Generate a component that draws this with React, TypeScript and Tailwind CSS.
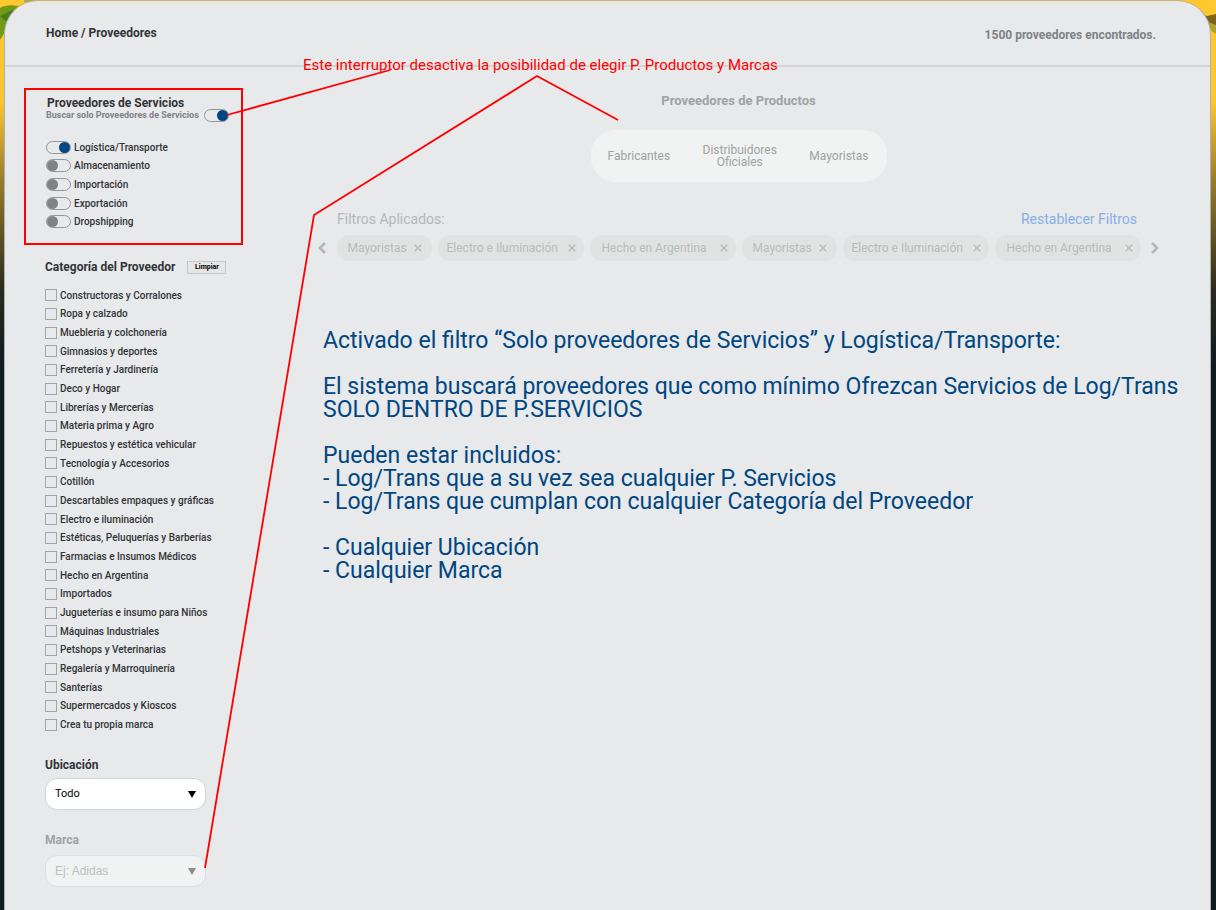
import React from "react";

const services = [
  { name: "Logística/Transporte", on: true },
  { name: "Almacenamiento", on: false },
  { name: "Importación", on: false },
  { name: "Exportación", on: false },
  { name: "Dropshipping", on: false },
];

const categories = [
  "Constructoras y Corralones",
  "Ropa y calzado",
  "Mueblería y colchonería",
  "Gimnasios y deportes",
  "Ferretería y Jardinería",
  "Deco y Hogar",
  "Librerías y Mercerías",
  "Materia prima y Agro",
  "Repuestos y estética vehicular",
  "Tecnología y Accesorios",
  "Cotillón",
  "Descartables empaques y gráficas",
  "Electro e iluminación",
  "Estéticas, Peluquerías y Barberías",
  "Farmacias e Insumos Médicos",
  "Hecho en Argentina",
  "Importados",
  "Jugueterías e insumo para Niños",
  "Máquinas Industriales",
  "Petshops y Veterinarias",
  "Regalería y Marroquinería",
  "Santerías",
  "Supermercados y Kioscos",
  "Crea tu propia marca",
];

const chips = [
  { label: "Mayoristas", size: "w-[95px] pl-[11px] pr-[10px]" },
  { label: "Electro e Iluminación", size: "w-[146px] pl-[9px] pr-[8px]" },
  { label: "Hecho en Argentina", size: "w-[146px] pl-[12px] pr-[8px]" },
  { label: "Mayoristas", size: "w-[95px] pl-[11px] pr-[10px]" },
  { label: "Electro e Iluminación", size: "w-[146px] pl-[9px] pr-[8px]" },
  { label: "Hecho en Argentina", size: "w-[146px] pl-[12px] pr-[8px]" },
];

function Toggle({ on, id }: { on: boolean; id: string }) {
  return (
    <input
      id={id}
      type="checkbox"
      role="switch"
      defaultChecked={on}
      className="flex h-[13px] w-[25px] shrink-0 appearance-none items-center rounded-full border border-[#939598] before:block before:size-[11px] before:rounded-full before:bg-[#808285] before:content-[''] checked:justify-end checked:before:bg-[#004680]"
    />
  );
}

function Arrow({ className }: { className: string }) {
  return (
    <svg viewBox="0 0 8 7" className={className} aria-hidden="true">
      <path d="M0 0h8L4 7z" fill="currentColor" />
    </svg>
  );
}

function Chevron({ d }: { d: string }) {
  return (
    <svg viewBox="0 0 8 12" className="h-3 w-2" fill="none" stroke="#b4b7b8" strokeWidth="2.6" aria-hidden="true">
      <path d={d} />
    </svg>
  );
}

function Sidebar() {
  return (
    <aside className="w-[219px] shrink-0">
      <section className="h-[157px] border-2 border-[#ff0000] pt-[6px] pl-[20px]">
        <h2 className="pl-px text-[12px] leading-[14px] font-bold">Proveedores de Servicios</h2>
        <div className="flex h-[10px] items-center gap-[5px]">
          <label htmlFor="solo" className="text-[9px] leading-[10px] font-bold text-[#808285]">
            Buscar solo Proveedores de Servicios
          </label>
          <Toggle on id="solo" />
        </div>
        <ul className="mt-[18px] grid h-[93px] auto-rows-fr">
          {services.map((s, i) => (
            <li key={s.name} className="flex items-center gap-[3px]">
              <Toggle on={s.on} id={`serv-${i}`} />
              <label htmlFor={`serv-${i}`} className="pt-px text-[10px] leading-[12px] font-medium">
                {s.name}
              </label>
            </li>
          ))}
        </ul>
      </section>

      <div className="pl-[21px]">
        <div className="mt-[15px] flex h-[14px] items-center gap-[12px]">
          <h2 className="text-[12px] leading-[14px] font-bold">Categoría del Proveedor</h2>
          <button className="h-[13px] w-[39px] border border-[#c4c6c8] bg-[#e6e6e6] text-[7px] leading-[11px] font-bold text-black">
            Limpiar
          </button>
        </div>
        <ul className="mt-[12px] grid h-[448px] auto-rows-fr">
          {categories.map((c, i) => (
            <li key={c} className="flex items-center gap-[3px]">
              <input
                id={`cat-${i}`}
                type="checkbox"
                className="size-[12px] shrink-0 appearance-none border border-[#a3a5a7] checked:bg-[#004680]"
              />
              <label htmlFor={`cat-${i}`} className="pt-px text-[10px] leading-[12px] font-medium whitespace-nowrap">
                {c}
              </label>
            </li>
          ))}
        </ul>

        <label htmlFor="ubicacion" className="mt-[24px] block text-[12px] leading-[14px] font-bold">
          Ubicación
        </label>
        <div className="mt-[6px] grid w-[161px] items-center">
          <select
            id="ubicacion"
            className="col-start-1 row-start-1 h-[32px] appearance-none rounded-[12px] border border-[#d1d3d4] bg-white pl-[9px] text-[11px] text-black"
          >
            <option>Todo</option>
          </select>
          <Arrow className="pointer-events-none col-start-1 row-start-1 mr-[10px] h-[7px] w-[8px] justify-self-end text-black" />
        </div>

        <label htmlFor="marca" className="mt-[23px] block text-[12px] leading-[14px] font-bold text-[#a0a2a3]">
          Marca
        </label>
        <div className="mt-[8px] grid w-[161px] items-center">
          <select
            id="marca"
            disabled
            className="col-start-1 row-start-1 h-[32px] appearance-none rounded-[12px] border border-[#dcdedf] bg-[#f1f3f2] pl-[9px] font-['Liberation_Sans',sans-serif] text-[12px] text-[#bdbfc0] opacity-100"
          >
            <option>Ej: Adidas</option>
          </select>
          <Arrow className="pointer-events-none col-start-1 row-start-1 mr-[10px] h-[7px] w-[8px] justify-self-end text-[#8b8d8e]" />
        </div>
      </div>
    </aside>
  );
}

function Results() {
  return (
    <main className="min-w-0 flex-1 pl-[75px] pr-[51px]">
      <div className="flex flex-col items-center pt-[6px]">
        <h2 className="text-[13px] leading-[14px] font-bold text-[#a0a2a3]">Proveedores de Productos</h2>
        <div className="mt-[22px] flex h-[52px] w-[296px] items-center justify-between rounded-[24px] bg-[#f1f3f2] pr-[18px] pl-[17px] text-[12px] leading-[12px] text-[#a0a2a3]">
          <button disabled>Fabricantes</button>
          <button disabled className="w-[80px]">Distribuidores Oficiales</button>
          <button disabled>Mayoristas</button>
        </div>
      </div>

      <div className="mt-[29px] flex justify-between pr-[22px] pl-[19px] text-[14px] leading-[16px]">
        <h3 className="text-[#b4b7b8]">Filtros Aplicados:</h3>
        <a href="#restablecer" className="text-[#86afe8]">Restablecer Filtros</a>
      </div>
      <div className="mt-[8px] flex items-center justify-between">
        <button disabled aria-label="Anterior">
          <Chevron d="M7 1 2 6l5 5" />
        </button>
        <ul className="flex gap-[6px]">
          {chips.map((chip, i) => (
            <li
              key={i}
              className={`flex h-[26px] items-center justify-between rounded-[12px] bg-[#e1e3e2] text-[12px] leading-[14px] whitespace-nowrap text-[#b9bcbc] ${chip.size}`}
            >
              <span>{chip.label}</span>
              <button disabled aria-label={`Quitar ${chip.label}`}>
                <svg viewBox="0 0 8 8" className="size-2" stroke="currentColor" strokeWidth="1.5" aria-hidden="true">
                  <path d="m.7.7 6.6 6.6M7.3.7.7 7.3" />
                </svg>
              </button>
            </li>
          ))}
        </ul>
        <button disabled aria-label="Siguiente">
          <Chevron d="m1 1 5 5-5 5" />
        </button>
      </div>

      <div className="-mr-[40px] mt-[68px] pl-[5px] text-[23px] leading-[23px] text-[#004680]">
        <p>Activado el filtro “Solo proveedores de Servicios” y Logística/Transporte:</p>
        <p className="mt-[23px]">
          El sistema buscará proveedores que como mínimo Ofrezcan Servicios de Log/Trans
          <br />
          SOLO DENTRO DE P.SERVICIOS
        </p>
        <p className="mt-[23px]">
          Pueden estar incluidos:
          <br />- Log/Trans que a su vez sea cualquier P. Servicios
          <br />- Log/Trans que cumplan con cualquier Categoría del Proveedor
        </p>
        <p className="mt-[23px]">
          - Cualquier Ubicación
          <br />- Cualquier Marca
        </p>
      </div>
    </main>
  );
}

export default function App() {
  return (
    <div className="relative min-h-screen overflow-hidden bg-[#111a20] bg-[linear-gradient(180deg,#ffc82e_0px,#ffc62f_100px,#9a7c2c_180px,#2b2a1d_290px,#111a20_370px)] pr-[5px] pl-[4px] font-['Roboto',sans-serif] text-[#323436]">
      <svg className="absolute top-0 left-0 h-[40px] w-[80px]" viewBox="0 0 80 40" aria-hidden="true">
        <path d="M0 8C6 5 14 4 24 8L12 20 0 40Z" fill="#719a19" />
        <path d="M0 16 14 9 8 23Z" fill="#4b7d16" />
        <path d="M24 0h44v2H24Z" fill="#a6a65d" />
      </svg>
      <svg className="absolute top-0 right-0 h-[40px] w-[80px]" viewBox="0 0 80 40" aria-hidden="true">
        <path d="M2 0h42v2H2Z" fill="#8fa168" />
        <path d="m62 12 9 4 9-2v12l-6-1Z" fill="#79651c" />
        <path d="m72 22 8 3v9l-6-4Z" fill="#b2a12c" />
      </svg>

      <div className="relative min-h-[910px] rounded-t-[34px] border border-t-[#d0b46c] border-b-0 border-[#a9b0b5] bg-[#e7e9eb] pb-[22px]">
        <header className="flex h-[66px] items-center justify-between border-b-2 border-[#d3d5d7] pr-[54px] pl-[41px] text-[12px] leading-[14px] font-bold">
          <nav aria-label="Ruta">
            <a href="#home">Home</a> / <a href="#proveedores">Proveedores</a>
          </nav>
          <p className="pt-[3px] text-[#808285]">1500 proveedores encontrados.</p>
        </header>
        <div className="flex pt-[21px] pl-[19px]">
          <Sidebar />
          <Results />
        </div>
      </div>

      <svg
        className="pointer-events-none absolute top-0 left-0 h-[910px] w-[1216px]"
        viewBox="0 0 1216 910"
        fill="none"
        stroke="#ff0000"
        strokeWidth="1.8"
        aria-hidden="true"
      >
        <path d="M227 115 390 70M618 120 537 76 314 215 205 868" />
      </svg>
      <p className="pointer-events-none absolute top-[56px] left-[303px] text-[15px] leading-[18px] whitespace-nowrap text-[#ff0000]">
        Este interruptor desactiva la posibilidad de elegir P. Productos y Marcas
      </p>
    </div>
  );
}
